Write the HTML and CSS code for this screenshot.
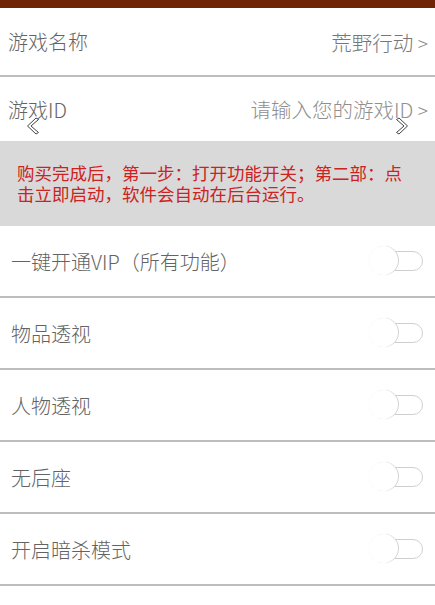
FILE: index.html
```html
<!DOCTYPE html>
<html lang="zh-CN">
<head>
    <meta charset="UTF-8">
    <meta name="viewport" content="width=device-width, initial-scale=1.0">
    <title>游戏设置</title>
    <link rel="stylesheet" href="styles.css">
</head>
<body>
    <div class="top-bar"></div>

    <div class="info-row name-row">
        <span class="label">游戏名称</span>
        <span class="value">荒野行动 <span class="arrow">&gt;</span></span>
    </div>

    <div class="info-row id-row">
        <span class="label">游戏ID</span>
        <span class="value">请输入您的游戏ID <span class="arrow">&gt;</span></span>
        <svg class="chev chev-left" width="14" height="18" viewBox="0 0 14 18">
            <polygon points="10,1 12.5,2.5 5,9 12.5,15.5 10,17 1.5,9" fill="#fff" stroke="#444" stroke-width="1"/>
        </svg>
        <svg class="chev chev-right" width="14" height="18" viewBox="0 0 14 18">
            <polygon points="4,1 1.5,2.5 9,9 1.5,15.5 4,17 12.5,9" fill="#fff" stroke="#444" stroke-width="1"/>
        </svg>
    </div>

    <div class="notice">
        购买完成后，第一步：打开功能开关；第二部：点击立即启动，软件会自动在后台运行。
    </div>

    <div class="switch-list">
        <div class="switch-row">
            <span class="label">一键开通VIP（所有功能）</span>
            <span class="switch"><span class="track"></span><span class="knob"></span></span>
        </div>
        <div class="switch-row">
            <span class="label">物品透视</span>
            <span class="switch"><span class="track"></span><span class="knob"></span></span>
        </div>
        <div class="switch-row">
            <span class="label">人物透视</span>
            <span class="switch"><span class="track"></span><span class="knob"></span></span>
        </div>
        <div class="switch-row">
            <span class="label">无后座</span>
            <span class="switch"><span class="track"></span><span class="knob"></span></span>
        </div>
        <div class="switch-row">
            <span class="label">开启暗杀模式</span>
            <span class="switch"><span class="track"></span><span class="knob"></span></span>
        </div>
    </div>
</body>
</html>
```

FILE: styles.css
```css
body {
    margin: 0;
    background-color: #ffffff;
    font-family: "Noto Sans CJK SC", "Noto Sans", sans-serif;
    font-weight: 300;
    color: #636363;
}
.top-bar {
    height: 8px;
    background-color: #702406;
}
.info-row {
    display: flex;
    justify-content: space-between;
    align-items: center;
    padding: 0 7px 0 8px;
    font-size: 20px;
    border-bottom: 2px solid #bdbdbd;
}
.name-row {
    height: 67px;
}
.id-row {
    height: 64px;
    border-bottom: none;
    position: relative;
}
.info-row .value {
    color: #777777;
    font-size: 20.5px;
}
.arrow {
    color: #8a8a8a;
    font-size: 19px;
}
.id-row .value {
    color: #8f8f8f;
}
.chev {
    position: absolute;
    top: 40px;
}
.chev-left {
    left: 26px;
}
.chev-right {
    left: 395px;
}
.notice {
    background-color: #d9d9d9;
    color: #cc2222;
    font-size: 17.5px;
    font-weight: 400;
    line-height: 21px;
    height: 85px;
    box-sizing: border-box;
    padding: 21px 16px 0 17px;
}
.switch-row {
    display: flex;
    justify-content: space-between;
    align-items: center;
    height: 70px;
    padding: 0 12px 0 11px;
    font-size: 20px;
    border-bottom: 2px solid #bdbdbd;
}
.switch {
    position: relative;
    width: 54px;
    height: 30px;
}
.track {
    position: absolute;
    right: 0;
    top: 5px;
    width: 30px;
    height: 20px;
    border: 1px solid #cfcfcf;
    border-radius: 0 10px 10px 0;
    box-sizing: border-box;
}
.knob {
    position: absolute;
    left: 0;
    top: 0;
    width: 29px;
    height: 29px;
    border-radius: 50%;
    background-color: #ffffff;
    box-shadow: 1px 0 0 #d4d4d4, 0 0 1px rgba(0, 0, 0, 0.08);
}
```
